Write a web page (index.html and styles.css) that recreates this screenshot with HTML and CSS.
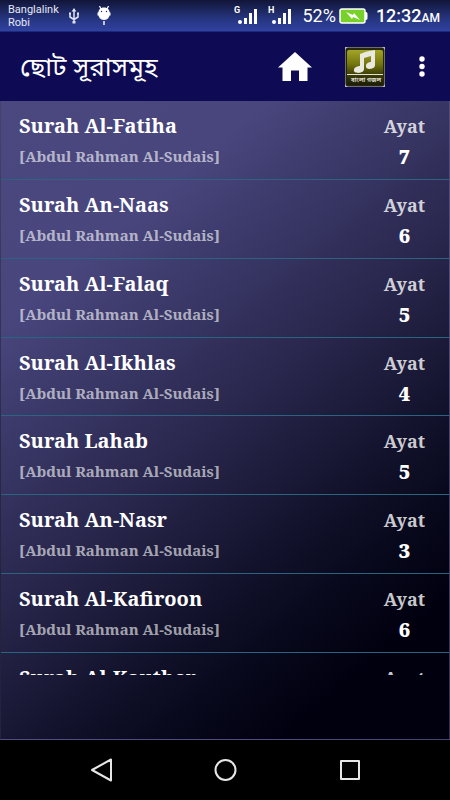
FILE: index.html
```html
<!DOCTYPE html>
<html lang="bn">
<head>
<meta charset="utf-8">
<meta name="viewport" content="width=device-width, initial-scale=1">
<title>ছোট সূরাসমূহ</title>
<link rel="stylesheet" href="styles.css">
</head>
<body>
<div class="status">
  <div class="carrier"><span>Banglalink</span><span>Robi</span></div>
  <svg class="usb" width="12" height="16" viewBox="0 0 12 16" fill="none" stroke="#dfe3f5" stroke-width="1.5"><path d="M6 3v11M2 6v3l4 2.500 4-2.500V6"/><path d="M6 0l2.400 3.500H3.600zM4.500 13h3v2.500h-3zM1 4.500h2v2H1zM9 4.500h2v2H9z" fill="#dfe3f5" stroke="none"/></svg>
  <svg class="droid" width="14" height="20" viewBox="0 0 14 20"><path d="M2.500 0l1.500 3M11.500 0l-1.500 3" stroke="#fff" stroke-width="1.200"/><path d="M7 1.500c4 0 5.700 2.500 5.700 6S11 14 7 14s-5.700-3-5.700-6.500 1.700-6 5.700-6z" fill="#fff"/><path d="M.5 6.500h13v3H.5z" fill="#fff"/><path d="M6.300 15h1.400v4H6.300z" fill="#fff"/><circle cx="4.500" cy="5.500" r=".7" fill="#22307c"/><circle cx="9.500" cy="5.500" r=".7" fill="#22307c"/></svg>
  <div class="signals">
    <svg width="24" height="19" viewBox="0 0 24 19" fill="#fff"><text x="0" y="7" class="net">G</text><circle cx="6" cy="16" r="2"/><path d="M10 12h3v6h-3zM15 7h3v11h-3zM20 3h3v15h-3z"/></svg>
    <svg width="24" height="19" viewBox="0 0 24 19" fill="#fff"><text x="0" y="7" class="net">H</text><circle cx="6" cy="16" r="2"/><path d="M10 12h3v6h-3zM15 7h3v11h-3zM20 3h3v15h-3z"/></svg>
  </div>
  <div class="power">
    <span>52%</span>
    <svg width="29" height="16" viewBox="0 0 29 16"><rect x="1" y="1" width="25" height="14" rx="2" fill="#78d129" stroke="#fff" stroke-width="1.500"/><path d="M26 4h1q1.500 0 1.500 2v4q0 2-1.500 2h-1z" fill="#fff"/><path d="M7 4l7 3 1-2 6 7-7-3-1 2z" fill="#fff"/></svg>
  </div>
  <div class="clock">12:32<small>AM</small></div>
</div>
<header class="bar">
  <h1>ছোট সূরাসমূহ</h1>
  <div class="actions">
    <button class="home" aria-label="Home"><svg width="34" height="30" viewBox="0 0 34 30"><path d="M17 0L34 15.500h-4.500V29H21V18.500h-8V29H4.500V15.500H0z" fill="#fff"/></svg></button>
    <button class="music" aria-label="বাংলা গজল">
      <svg width="40" height="40" viewBox="0 0 40 40"><defs><linearGradient id="g" x1="0" y1="0" x2="0" y2="1"><stop offset="0" stop-color="#a3a528"/><stop offset=".4" stop-color="#74760f"/><stop offset=".7" stop-color="#3c3d08"/><stop offset="1" stop-color="#1d1d08"/></linearGradient></defs><rect width="40" height="40" fill="#b6b7bd"/><rect x=".5" y=".5" width="39" height="39" rx="3" fill="#27270c"/><rect x="2" y="3" width="36" height="35" rx="2" fill="url(#g)"/><path d="M15 7q6-3 15-4v15c0 5-10 5-9 1 0-3 3-4 5-4V9l-7 2v11c0 5-11 5-10 1 0-3 4-4 6-4z" fill="#e9e9e0"/><path d="M2 27.500h36" stroke="#e3e3d0"/><text x="21" y="35" class="caption">বাংলা গজল</text></svg>
    </button>
    <button class="more" aria-label="More options"><svg width="6" height="22" viewBox="0 0 6 22" fill="#fff"><circle cx="3" cy="3" r="2.700"/><circle cx="3" cy="10.500" r="2.700"/><circle cx="3" cy="18" r="2.700"/></svg></button>
  </div>
</header>
<main class="content">
  <ul class="list">
    <li><div class="surah"><h2>Surah Al-Fatiha</h2><p>[Abdul Rahman Al-Sudais]</p></div><div class="ayat"><span>Ayat</span><b>7</b></div></li>
    <li><div class="surah"><h2>Surah An-Naas</h2><p>[Abdul Rahman Al-Sudais]</p></div><div class="ayat"><span>Ayat</span><b>6</b></div></li>
    <li><div class="surah"><h2>Surah Al-Falaq</h2><p>[Abdul Rahman Al-Sudais]</p></div><div class="ayat"><span>Ayat</span><b>5</b></div></li>
    <li><div class="surah"><h2>Surah Al-Ikhlas</h2><p>[Abdul Rahman Al-Sudais]</p></div><div class="ayat"><span>Ayat</span><b>4</b></div></li>
    <li><div class="surah"><h2>Surah Lahab</h2><p>[Abdul Rahman Al-Sudais]</p></div><div class="ayat"><span>Ayat</span><b>5</b></div></li>
    <li><div class="surah"><h2>Surah An-Nasr</h2><p>[Abdul Rahman Al-Sudais]</p></div><div class="ayat"><span>Ayat</span><b>3</b></div></li>
    <li><div class="surah"><h2>Surah Al-Kafiroon</h2><p>[Abdul Rahman Al-Sudais]</p></div><div class="ayat"><span>Ayat</span><b>6</b></div></li>
    <li><div class="surah"><h2>Surah Al-Kauther</h2></div><div class="ayat"><span>Ayat</span></div></li>
  </ul>
</main>
<nav class="nav">
  <button aria-label="Back"><svg width="24" height="24" viewBox="0 0 24 24"><path d="M22 1.500v21L3 12z"/></svg></button>
  <button aria-label="Home screen"><svg width="24" height="24" viewBox="0 0 24 24"><circle cx="12.500" cy="12" r="10"/></svg></button>
  <button aria-label="Recent apps"><svg width="24" height="24" viewBox="0 0 24 24"><rect x="4" y="3" width="18" height="18"/></svg></button>
</nav>
</body>
</html>
```
FILE: styles.css
```css
* { box-sizing: border-box; }
body {
  margin: 0;
  height: 100vh;
  display: flex;
  flex-direction: column;
  background: #000;
  color: #fff;
  font-family: Roboto, "Noto Sans", sans-serif;
}
button { padding: 0; border: 0; background: none; color: inherit; }
svg { display: block; }
h1, h2, p, ul { margin: 0; padding: 0; }

.status {
  height: 32px;
  flex: none;
  display: flex;
  align-items: center;
  padding: 0 10px 0 8px;
  background: linear-gradient(#111538, #26357f 60%, #3041a0);
  border-bottom: 1px solid #1c2a7c;
}
.carrier {
  display: flex;
  flex-direction: column;
  font-size: 11px;
  line-height: 13px;
  color: #e6e8f5;
}
.usb { margin-left: 9px; }
.droid { margin-left: 17px; }
.signals { display: flex; gap: 10px; margin-left: auto; }
.net { font: 700 9px Roboto, sans-serif; }
.power {
  display: flex;
  align-items: center;
  gap: 3px;
  margin-left: 10px;
  font-size: 18px;
}
.clock { margin-left: 8px; font-size: 18px; font-weight: 500; }
.clock small { font-size: 12px; }

.bar {
  height: 69px;
  flex: none;
  display: flex;
  align-items: center;
  justify-content: space-between;
  padding: 0 25px 0 20px;
  background: #0e0a54;
}
.bar h1 {
  padding-top: 6px;
  font: 400 26px/40px "Noto Sans Bengali", "Noto Sans", sans-serif;
}
.actions { display: flex; align-items: center; }
.music { margin-left: 33px; }
.more { margin-left: 34px; }
.caption { font: 700 6px "Noto Sans Bengali", sans-serif; fill: #d8d8c8; text-anchor: middle; }

.content {
  flex: 1;
  min-height: 0;
  padding-bottom: 64px;
  background: linear-gradient(140deg, #4b4880 0%, #48467d 22%, #2b2950 48%, #0d0d24 71%, #00000f 86%);
  border: 1px solid rgba(90, 85, 130, .4);
  border-top: 0;
}
.list {
  height: 100%;
  display: grid;
  grid-template-rows: repeat(7, 1fr) 22px;
  overflow: hidden;
  list-style: none;
}
.list li {
  min-height: 0;
  display: flex;
  justify-content: space-between;
  padding: 11px 24px 0 18px;
  border-bottom: 1px solid #2b6480;
  font-family: "Noto Serif", "Droid Serif", "Liberation Serif", serif;
  font-weight: 700;
}
.list li:last-child { border-bottom: 0; }
.surah h2 { font-size: 20px; line-height: 28px; }
.surah p { margin-top: 4px; font-size: 15px; line-height: 24px; color: rgba(255, 255, 255, .62); }
.ayat {
  display: flex;
  flex-direction: column;
  align-items: center;
  font-size: 18px;
  line-height: 28px;
}
.ayat span { color: rgba(255, 255, 255, .8); }
.ayat b { margin-top: 3px; font-size: 20px; }

.nav {
  height: 60px;
  flex: none;
  display: flex;
  align-items: center;
  justify-content: center;
  gap: 100px;
}
.nav svg { fill: none; stroke: #e6e6e6; stroke-width: 2; stroke-linejoin: round; }
```
